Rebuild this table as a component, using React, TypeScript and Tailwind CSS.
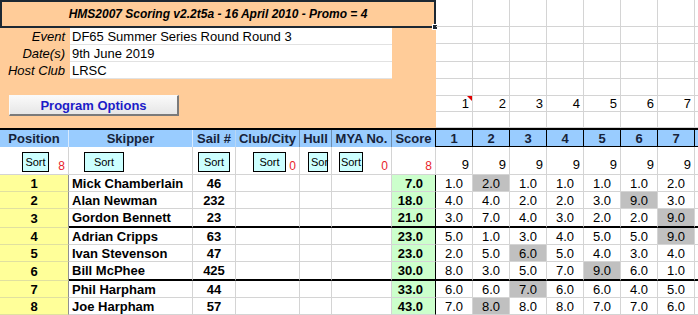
import React from "react";

const FONT = "font-['Liberation_Sans',Arial,Helvetica,sans-serif]";

const info = [
  { label: "Event", value: "DF65 Summer Series Round Round 3" },
  { label: "Date(s)", value: "9th June 2019" },
  { label: "Host Club", value: "LRSC" },
];

const topRowHeights = [
  "h-[27px]",
  "h-[17px]",
  "h-[18px]",
  "h-[17px]",
  "h-[17px]",
  "h-[16px]",
  "h-[16px]",
];

const races = [1, 2, 3, 4, 5, 6, 7];

const results = [
  { pos: 1, name: "Mick Chamberlain", sail: "46", score: "7.0", r: ["1.0", "2.0", "1.0", "1.0", "1.0", "1.0", "2.0"], drop: 1 },
  { pos: 2, name: "Alan Newman", sail: "232", score: "18.0", r: ["4.0", "4.0", "2.0", "2.0", "3.0", "9.0", "3.0"], drop: 5 },
  { pos: 3, name: "Gordon Bennett", sail: "23", score: "21.0", r: ["3.0", "7.0", "4.0", "3.0", "2.0", "2.0", "9.0"], drop: 6 },
  { pos: 4, name: "Adrian Cripps", sail: "63", score: "23.0", r: ["5.0", "1.0", "3.0", "4.0", "5.0", "5.0", "9.0"], drop: 6 },
  { pos: 5, name: "Ivan Stevenson", sail: "47", score: "23.0", r: ["2.0", "5.0", "6.0", "5.0", "4.0", "3.0", "4.0"], drop: 2 },
  { pos: 6, name: "Bill McPhee", sail: "425", score: "30.0", r: ["8.0", "3.0", "5.0", "7.0", "9.0", "6.0", "1.0"], drop: 4 },
  { pos: 7, name: "Phil Harpham", sail: "44", score: "33.0", r: ["6.0", "6.0", "7.0", "6.0", "6.0", "4.0", "5.0"], drop: 2 },
  { pos: 8, name: "Joe Harpham", sail: "57", score: "43.0", r: ["7.0", "8.0", "8.0", "8.0", "7.0", "7.0", "6.0"], drop: 1 },
];

function SortButton({ className, label = "Sort" }: { className: string; label?: string }) {
  return (
    <div
      className={`h-[20px] shrink-0 border border-black bg-[#ccffff] text-[11px] flex items-center ${className}`}
    >
      {label}
    </div>
  );
}

function Red({ n }: { n: string }) {
  return <span className="ml-auto self-end pb-[2px] pr-[3px] text-[12px] text-[#e8242c]">{n}</span>;
}

export default function App() {
  return (
    <div className={`${FONT} w-[698px] h-[315px] overflow-hidden bg-white text-[13px] leading-none text-black`}>
      {/* top: title panel + blank sheet cells */}
      <div className="flex h-[128px]">
        <div className="flex w-[436px] shrink-0 flex-col bg-[#ffcc99]">
          <div className="relative flex h-[28px] shrink-0 items-center justify-center border-2 border-[#1c2833] text-[12px] font-bold italic">
            HMS2007 Scoring v2.2t5a - 16 April 2010 - Promo = 4
            <span className="absolute -bottom-[4px] -right-[4px] size-[6px] border border-white bg-[#1c2833]" />
          </div>
          {info.map((row) => (
            <div key={row.label} className="flex h-[17px] shrink-0">
              <div className="flex w-[70px] items-center justify-end pr-[5px] italic">{row.label}</div>
              <div className="flex w-[322px] items-center border-b border-[#e2e2e2] bg-white pl-[2px]">
                {row.value}
              </div>
            </div>
          ))}
          <div className="pl-[9px] pt-[16px]">
            <button className="flex h-[21px] w-[170px] items-center justify-center border-b-2 border-r-2 border-l border-t border-b-[#7a7a7a] border-r-[#7a7a7a] border-l-[#fafafa] border-t-[#fafafa] bg-gradient-to-b from-[#fafafa] to-[#e6e6e6] text-[13px] font-bold text-[#1c1cc8]">
              Program Options
            </button>
          </div>
        </div>
        <div className="flex flex-1 flex-col">
          {topRowHeights.map((h, i) => (
            <div key={i} className={`flex ${h} shrink-0`}>
              {[...races, 8].map((c) => (
                <div
                  key={c}
                  className="relative flex w-[37px] shrink-0 items-center justify-end border-b border-r border-[#d4d4d4] pr-[3px]"
                >
                  {i === 5 && c <= 7 ? c : ""}
                  {i === 5 && c === 1 && (
                    <span className="absolute right-0 top-0 border-l-[5px] border-t-[5px] border-l-transparent border-t-[#e00000]" />
                  )}
                </div>
              ))}
            </div>
          ))}
        </div>
      </div>

      {/* column header */}
      <div className="flex h-[19px] border-t-2 border-black bg-[#99ccff] font-bold text-[#16233a]">
        <div className="flex w-[69px] shrink-0 items-center justify-center border-r border-[#d8ebff]">Position</div>
        <div className="flex w-[124px] shrink-0 items-center justify-center border-r border-[#d8ebff]">Skipper</div>
        <div className="flex w-[43px] shrink-0 items-center justify-center border-r border-[#b8d6f4]">Sail #</div>
        <div className="flex w-[64px] shrink-0 items-center justify-center border-r border-[#6f8fb0]">Club/City</div>
        <div className="flex w-[32px] shrink-0 items-center justify-center border-r border-[#6f8fb0]">Hull</div>
        <div className="flex w-[60px] shrink-0 items-center justify-center border-r border-[#6f8fb0]">MYA No.</div>
        <div className="flex w-[44px] shrink-0 items-center justify-center border-r border-black">Score</div>
        {[...races, 8].map((c) => (
          <div key={c} className="flex w-[37px] shrink-0 items-center justify-center border-b border-r border-black">
            {c <= 7 ? c : ""}
          </div>
        ))}
      </div>

      {/* sort row */}
      <div className="flex h-[28px] border-b border-[#d4d4d4]">
        <div className="flex w-[69px] shrink-0 border-r border-[#d4d4d4] pt-[5px]">
          <SortButton className="ml-[22px] w-[27px] justify-center" />
          <Red n="8" />
        </div>
        <div className="flex w-[124px] shrink-0 border-r border-[#d4d4d4] pt-[5px]">
          <SortButton className="ml-[15px] w-[40px] justify-center" />
        </div>
        <div className="flex w-[43px] shrink-0 border-r border-[#d4d4d4] pt-[5px]">
          <SortButton className="ml-[5px] w-[32px] justify-center" />
        </div>
        <div className="flex w-[64px] shrink-0 border-r border-[#d4d4d4] pt-[5px]">
          <SortButton className="ml-[17px] w-[33px] justify-center" />
          <Red n="0" />
        </div>
        <div className="flex w-[32px] shrink-0 border-r border-[#d4d4d4] pt-[5px]">
          <SortButton label="Sor" className="ml-[8px] w-[20px] pl-[2px]" />
        </div>
        <div className="flex w-[60px] shrink-0 border-r border-[#d4d4d4] pt-[5px]">
          <SortButton className="ml-[7px] w-[24px] justify-center" />
          <Red n="0" />
        </div>
        <div className="flex w-[44px] shrink-0 border-r border-[#d4d4d4] pt-[5px]">
          <Red n="8" />
        </div>
        {[...races, 8].map((c) => (
          <div key={c} className="flex w-[37px] shrink-0 items-end justify-end border-r border-[#d4d4d4] pb-[3px] pr-[3px]">
            {c <= 7 ? "9" : ""}
          </div>
        ))}
      </div>

      {/* results */}
      {results.map((row, i) => {
        const thick = i === 2 || i === 5;
        const line = thick ? "border-b-2 border-b-black" : "border-b border-b-[#d4d4d4]";
        return (
          <div key={row.pos} className={`flex ${thick ? "h-[19px]" : "h-[17px]"}`}>
            <div className="flex w-[69px] shrink-0 items-center justify-center border-b border-r border-b-[#e0e0a0] border-r-[#909090] bg-[#ffff99] font-bold">
              {row.pos}
            </div>
            <div className={`flex w-[124px] shrink-0 items-center border-r border-r-[#d4d4d4] pl-[3px] font-bold ${line}`}>
              {row.name}
            </div>
            <div className={`flex w-[43px] shrink-0 items-center justify-center border-r border-r-[#d4d4d4] font-bold ${line}`}>
              {row.sail}
            </div>
            <div className={`w-[64px] shrink-0 border-r border-r-[#d4d4d4] ${line}`} />
            <div className={`w-[32px] shrink-0 border-r border-r-[#d4d4d4] ${line}`} />
            <div className={`w-[60px] shrink-0 border-r border-r-[#d4d4d4] ${line}`} />
            <div className={`flex w-[44px] shrink-0 items-center justify-end border-r border-r-black bg-[#ccffcc] pr-[12px] font-bold ${line}`}>
              {row.score}
            </div>
            {row.r.map((v, j) => (
              <div
                key={j}
                className={`flex w-[37px] shrink-0 items-center justify-center border-r border-r-[#d4d4d4] ${line} ${
                  j === row.drop ? "bg-[#c0c0c0]" : ""
                }`}
              >
                {v}
              </div>
            ))}
            <div className={`w-[37px] shrink-0 border-r border-r-[#d4d4d4] ${line}`} />
          </div>
        );
      })}
    </div>
  );
}
